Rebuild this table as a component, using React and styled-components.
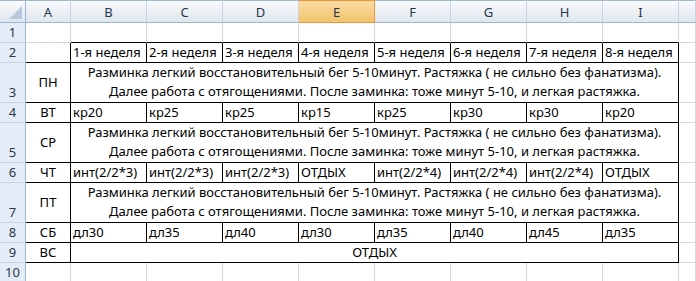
import React from 'react';
import styled, { createGlobalStyle } from 'styled-components';

const GRID = '#d0d7e5';
const INK = '#000000';
const HEAD_LINE = '#9eb6ce';

const Global = createGlobalStyle`
  html, body { margin: 0; padding: 0; background: #ffffff; overflow: hidden; }
  body { font-family: "Noto Sans", "Open Sans", sans-serif; }
`;

const Sheet = styled.div`
  display: grid;
  grid-template-columns: 26px 45px repeat(8, 76px) 1fr;
  grid-template-rows: ${p => p.$rows};
  width: 696px;
  height: 281px;
  overflow: hidden;
  font-size: 13px;
  color: #000;
`;

const ColHead = styled.div`
  box-sizing: border-box;
  display: flex;
  align-items: center;
  justify-content: center;
  padding-top: 1px;
  color: #27374a;
  font-size: 13px;
  border-top: 1px solid ${p => (p.$active ? '#f29436' : HEAD_LINE)};
  border-bottom: 1px solid ${p => (p.$active ? '#f29436' : HEAD_LINE)};
  border-right: 1px solid ${p => (p.$active ? '#f29436' : '#c5d2e3')};
  background: ${p =>
    p.$active
      ? 'linear-gradient(#f9dba3, #f2c46c)'
      : 'linear-gradient(#f8fafc, #dfe6ef)'};
`;

const Corner = styled(ColHead)`
  position: relative;
  border-right-color: ${HEAD_LINE};
  &::after {
    content: '';
    position: absolute;
    right: 3px;
    bottom: 3px;
    width: 0;
    height: 0;
    border-left: 13px solid transparent;
    border-bottom: 13px solid #b9c9dc;
  }
`;

const RowHead = styled.div`
  box-sizing: border-box;
  display: flex;
  align-items: flex-end;
  justify-content: center;
  padding-bottom: 1px;
  line-height: 18px;
  color: #27374a;
  background: #e4ecf7;
  border-right: 1px solid ${HEAD_LINE};
  border-bottom: 1px solid #c5d2e3;
`;

const Cell = styled.div`
  box-sizing: border-box;
  grid-column: span ${p => p.$span || 1};
  display: flex;
  align-items: ${p => (p.$mid ? 'center' : 'flex-end')};
  justify-content: ${p => (p.$center ? 'center' : 'flex-start')};
  padding: 0 2px 1px;
  line-height: 18px;
  white-space: nowrap;
  overflow: hidden;
  border-right: 1px solid ${p => (p.$r ? INK : GRID)};
  border-bottom: 1px solid ${p => (p.$b ? INK : GRID)};
`;

const Note = styled.div`
  text-align: center;
  line-height: 19px;
`;

const weeks = Array.from({ length: 8 }, (_, i) => `${i + 1}-я неделя`);

const NOTE = [
  'Разминка легкий восстановительный бег 5-10минут. Растяжка ( не сильно без фанатизма).',
  'Далее работа с отягощениями. После заминка: тоже минут 5-10, и легкая растяжка.',
];

const rows = [
  { h: 20, kind: 'blank', topOfTable: true },
  { h: 20, kind: 'cells', label: '', cells: weeks },
  { h: 40, kind: 'note', label: 'ПН' },
  { h: 20, kind: 'cells', label: 'ВТ', cells: ['кр20', 'кр25', 'кр25', 'кр15', 'кр25', 'кр30', 'кр30', 'кр20'] },
  { h: 40, kind: 'note', label: 'СР' },
  {
    h: 20,
    kind: 'cells',
    label: 'ЧТ',
    cells: ['инт(2/2*3)', 'инт(2/2*3)', 'инт(2/2*3)', 'ОТДЫХ', 'инт(2/2*4)', 'инт(2/2*4)', 'инт(2/2*4)', 'ОТДЫХ'],
  },
  { h: 40, kind: 'note', label: 'ПТ' },
  { h: 20, kind: 'cells', label: 'СБ', cells: ['дл30', 'дл35', 'дл40', 'дл30', 'дл35', 'дл40', 'дл45', 'дл35'] },
  { h: 20, kind: 'merged', label: 'ВС', text: 'ОТДЫХ' },
  { h: 20, kind: 'blank' },
];

const letters = ['A', 'B', 'C', 'D', 'E', 'F', 'G', 'H', 'I', ''];

function SheetRow({ row, index }) {
  const n = index + 1;
  const out = [<RowHead key="h">{n}</RowHead>];

  if (row.kind === 'blank') {
    out.push(<Cell key="a" />);
    for (let i = 0; i < 8; i++) out.push(<Cell key={i} $b={row.topOfTable} />);
  } else {
    // column A: day label, bordered from row 2 down
    out.push(
      <Cell key="a" $center $mid $r $b>
        {row.label}
      </Cell>
    );
    if (row.kind === 'cells') {
      row.cells.forEach((t, i) =>
        out.push(
          <Cell key={i} $r $b>
            {t}
          </Cell>
        )
      );
    } else if (row.kind === 'note') {
      out.push(
        <Cell key="n" $span={8} $center $r $b>
          <Note>
            {NOTE[0]}
            <br />
            {NOTE[1]}
          </Note>
        </Cell>
      );
    } else {
      out.push(
        <Cell key="m" $span={8} $center $r $b>
          {row.text}
        </Cell>
      );
    }
  }
  out.push(<Cell key="j" />);
  return out;
}

export default function App() {
  const template = ['23px', ...rows.map(r => `${r.h}px`)].join(' ');
  return (
    <>
      <Global />
      <Sheet $rows={template}>
        <Corner />
        {letters.map((l, i) => (
          <ColHead key={i} $active={l === 'E'}>
            {l}
          </ColHead>
        ))}
        {rows.map((row, i) => (
          <SheetRow key={i} row={row} index={i} />
        ))}
      </Sheet>
    </>
  );
}
